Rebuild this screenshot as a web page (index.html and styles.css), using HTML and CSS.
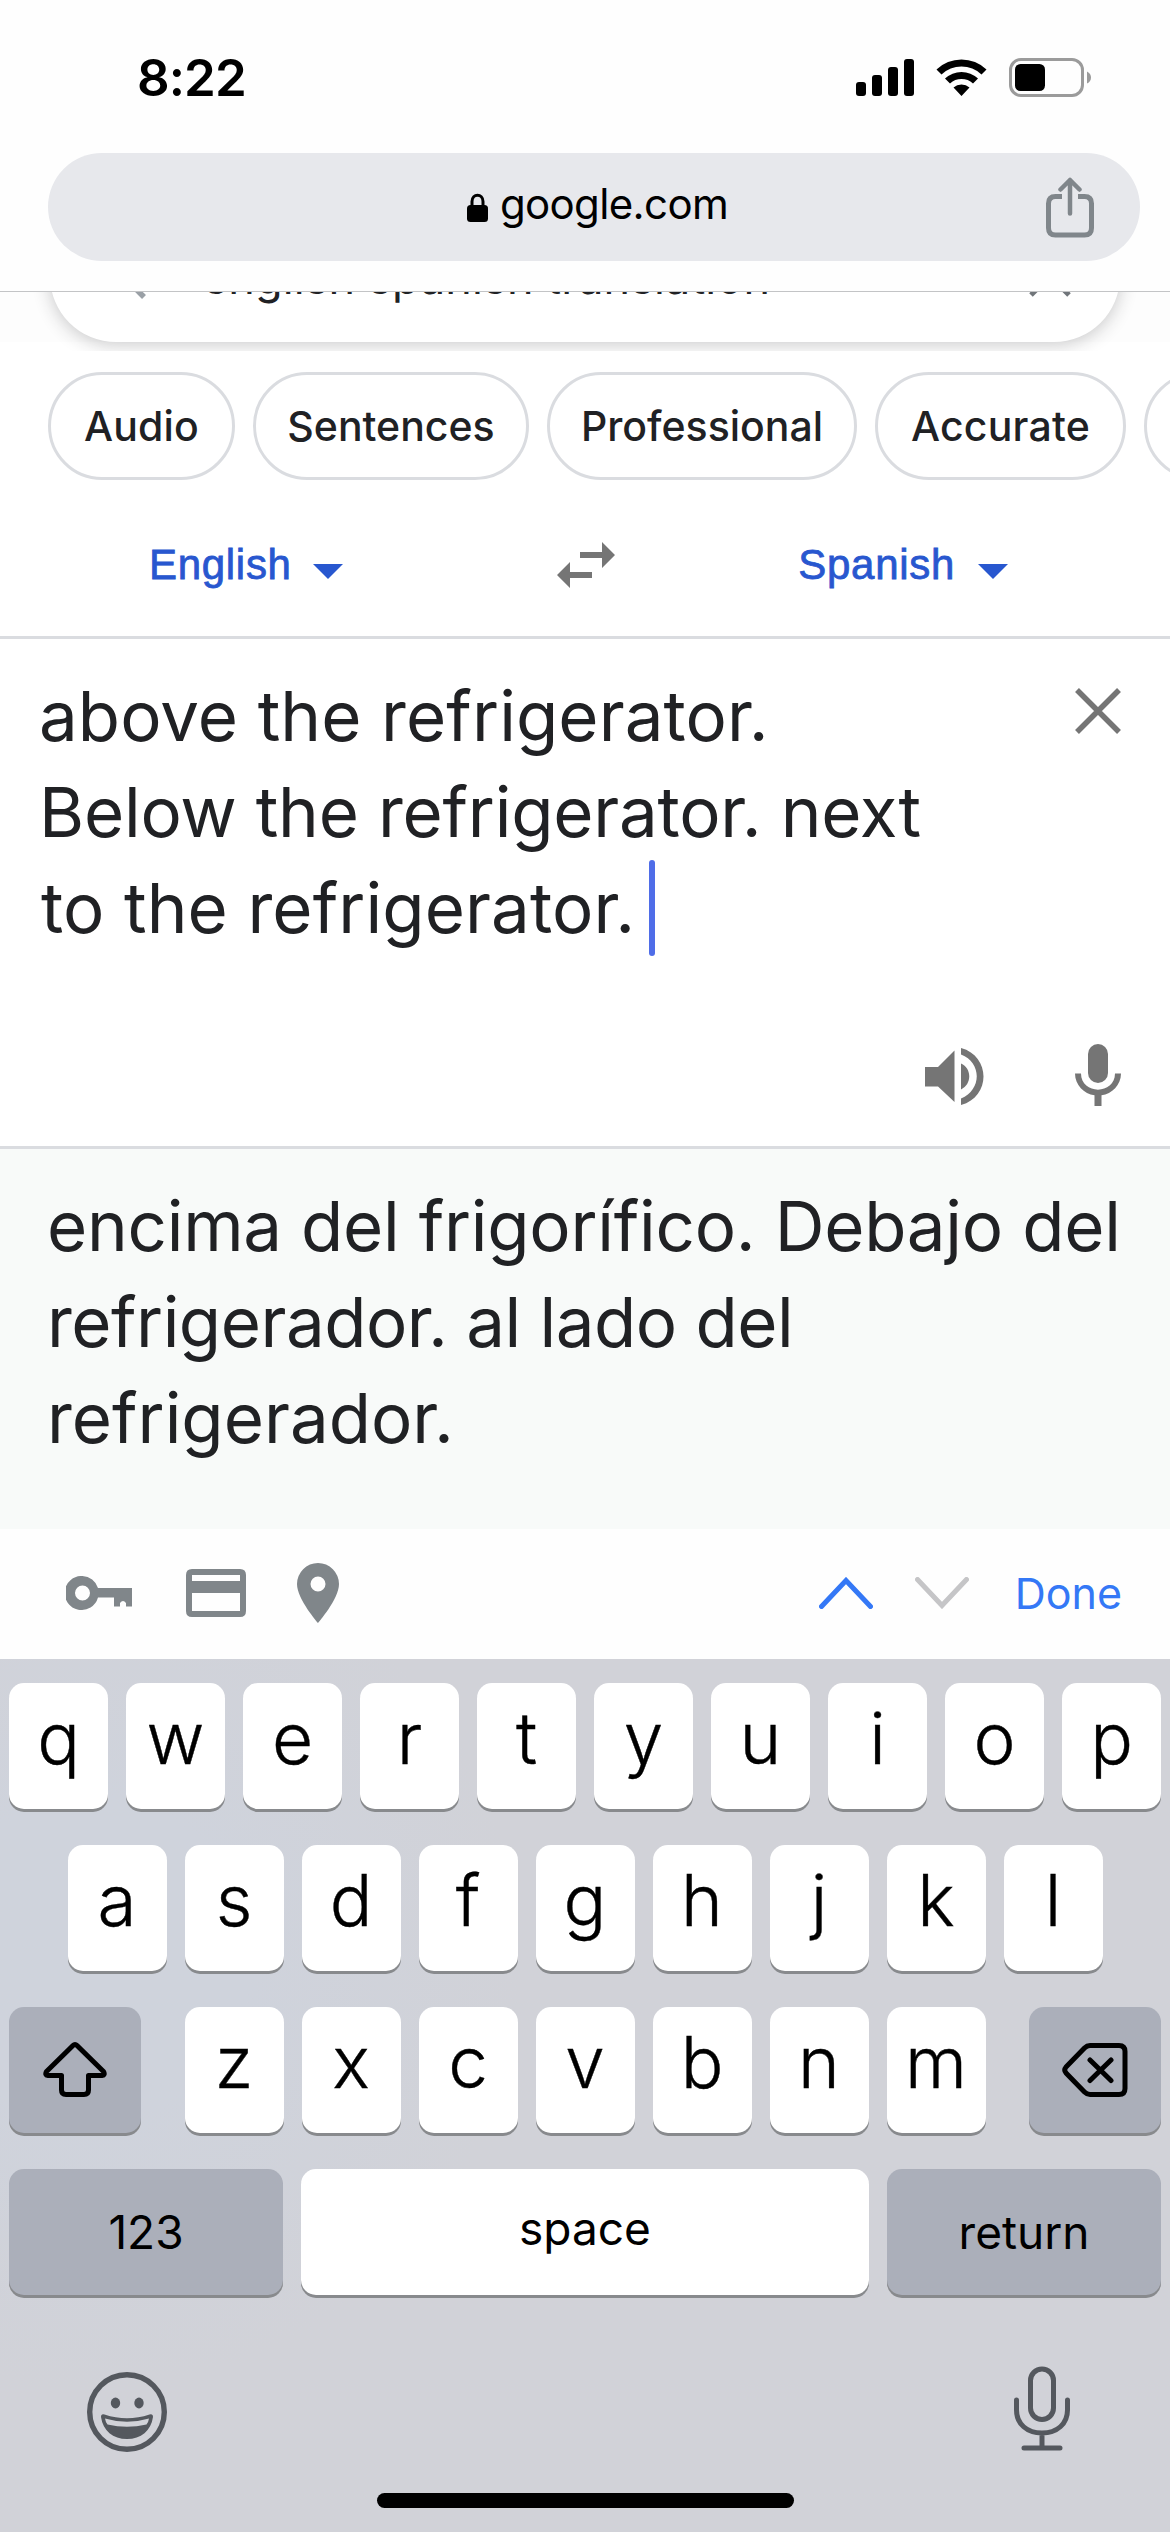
FILE: index.html
```html
<!DOCTYPE html>
<html lang="en">
<head>
<meta charset="utf-8">
<title>Translate</title>
<link rel="stylesheet" href="styles.css">
</head>
<body>
<div class="screen">
  <header class="browser">
    <div class="status">
      <span class="clock">8:22</span>
      <div class="indicators">
        <svg width="58" height="39" viewBox="0 0 58 39"><rect x="0" y="24" width="10" height="14" rx="3"/><rect x="16" y="17" width="10" height="21" rx="3"/><rect x="32" y="9" width="10" height="29" rx="3"/><rect x="48" y="1" width="10" height="37" rx="3"/></svg>
        <svg width="51" height="39" viewBox="0 0 51 39"><path d="M0.5 11.5A36 36 0 0 1 50.500 11.500L45.500 16.500A29 29 0 0 0 5.500 16.500ZM9 20.500A24 24 0 0 1 42 20.500L37 25.500A17 17 0 0 0 14 25.500ZM17.500 29.500A12 12 0 0 1 33.500 29.500L25.500 38Z"/></svg>
        <svg width="82" height="39" viewBox="0 0 82 39"><rect x="1.500" y="1.500" width="72" height="36" rx="10.500" fill="none" stroke="#9b9b9b" stroke-width="3"/><rect x="6" y="6" width="30" height="27" rx="5.500"/><path d="M78 13.500Q82 15.500 82 19.500T78 25.500Z" fill="#9b9b9b"/></svg>
      </div>
    </div>
    <div class="address">
      <div class="site">
        <svg width="21" height="29" viewBox="0 0 21 29"><path d="M5 14V8.500C5 0 16 0 16 8.500V14" fill="none" stroke="#000" stroke-width="3"/><rect x="0" y="12" width="21" height="17" rx="3.500"/></svg>
        <span class="domain">google.com</span>
      </div>
      <svg class="share" width="48" height="61" viewBox="0 0 48 61"><g fill="none" stroke="#80868b" stroke-width="5"><path d="M16 19.500H9.500Q2.500 19.500 2.500 26.500V51Q2.500 58 9.500 58H38.500Q45.500 58 45.500 51V26.500Q45.500 19.500 38.500 19.500H32"/><path d="M24 36.500V3M14.500 12.500L24 3L33.500 12.500" stroke-width="4.500" stroke-linecap="round" stroke-linejoin="round"/></g></svg>
    </div>
  </header>

  <div class="search-strip">
    <div class="search-box">
      <svg width="50" height="50" viewBox="0 0 50 50"><g fill="none" stroke="#9aa0a6" stroke-width="5.500"><circle cx="18" cy="18" r="14"/><path d="M28 28L46 46"/></g></svg>
      <span class="query">english spanish translation</span>
      <svg width="44" height="44" viewBox="0 0 44 44"><path d="M3 3L41 41M41 3L3 41" fill="none" stroke="#70757a" stroke-width="5"/></svg>
    </div>
  </div>

  <nav class="chips">
    <span class="chip audio">Audio</span>
    <span class="chip sentences">Sentences</span>
    <span class="chip professional">Professional</span>
    <span class="chip accurate">Accurate</span>
    <span class="chip more"></span>
  </nav>

  <div class="languages">
    <div class="language source">English <svg width="30" height="15" viewBox="0 0 30 15"><path d="M0 0H30L15 15Z"/></svg></div>
    <svg class="swap" width="58" height="46" viewBox="0 0 58 46"><path d="M23 10H45V0L58 13L45 26V16H23ZM35 30H13V20L0 33L13 46V36H35Z"/></svg>
    <div class="language target">Spanish <svg width="30" height="15" viewBox="0 0 30 15"><path d="M0 0H30L15 15Z"/></svg></div>
  </div>

  <section class="source-panel">
    <div class="source-main">
      <p class="source-text"><span class="l1">above the refrigerator.</span><br><span class="l2">Below the refrigerator. next</span><br><span class="l3">to the refrigerator.</span><span class="caret"></span></p>
      <svg class="clear" width="46" height="46" viewBox="0 0 46 46"><path d="M2 2L44 44M44 2L2 44" fill="none" stroke="#757575" stroke-width="5.500"/></svg>
    </div>
    <div class="source-tools">
      <svg width="59" height="62" viewBox="0 0 59 62"><path d="M0 23H13L29.500 6.500V58L13 42.500H0ZM36 19.500C47 24 47 40.500 36 45.500ZM36 4C66 12 66 53 36 61V54.500C57 46 57 18.500 36 10.500Z"/></svg>
      <svg width="46" height="62" viewBox="0 0 46 62"><rect x="13" y="0" width="20" height="39" rx="10"/><path d="M0 29.500H6C6 51 40 51 40 29.500H46C46 41 37 50 26.500 51.300V62H19.500V51.300C9 50 0 41 0 29.500Z"/></svg>
    </div>
  </section>

  <section class="result-panel">
    <p class="result-text"><span class="r1">encima del frigorífico. Debajo del</span><br><span class="r2">refrigerador. al lado del</span><br><span class="r3">refrigerador.</span></p>
  </section>

  <div class="form-bar">
    <div class="autofill">
      <svg class="key-icon" width="66" height="34" viewBox="0 0 66 34"><path fill-rule="evenodd" d="M16.500 0A17 17 0 0 1 32 12H66V30.500H60V27Q57 23 54 27V30.500H48V21.500H32A17 17 0 1 1 16.500 0ZM16.500 9.500A7.500 7.500 0 1 0 16.500 24.500A7.500 7.500 0 1 0 16.500 9.500Z"/></svg>
      <svg class="card-icon" width="60" height="48" viewBox="0 0 60 48"><path fill-rule="evenodd" d="M6 0H54Q60 0 60 6V42Q60 48 54 48H6Q0 48 0 42V6Q0 0 6 0ZM6 6V12H54V6ZM6 24V42H54V24Z"/></svg>
      <svg width="42" height="60" viewBox="0 0 42 60"><path fill-rule="evenodd" d="M21 0A21 21 0 0 1 42 21C42 36 21 60 21 60S0 36 0 21A21 21 0 0 1 21 0ZM21 13.500A7.500 7.500 0 1 0 21 28.500A7.500 7.500 0 1 0 21 13.500Z"/></svg>
    </div>
    <div class="field-nav">
      <svg width="54" height="32" viewBox="0 0 54 32"><path d="M2.500 29.500L27 3.500L51.500 29.500" fill="none" stroke="#3478f6" stroke-width="5" stroke-linecap="round"/></svg>
      <svg width="54" height="32" viewBox="0 0 54 32"><path d="M2.500 2.500L27 28.500L51.500 2.500" fill="none" stroke="#c5c5c7" stroke-width="5" stroke-linecap="round"/></svg>
      <span class="done">Done</span>
    </div>
  </div>

  <div class="keyboard">
    <div class="keys">
      <div class="row"><span class="key">q</span><span class="key">w</span><span class="key">e</span><span class="key">r</span><span class="key">t</span><span class="key">y</span><span class="key">u</span><span class="key">i</span><span class="key">o</span><span class="key">p</span></div>
      <div class="row"><span class="key">a</span><span class="key">s</span><span class="key">d</span><span class="key">f</span><span class="key">g</span><span class="key">h</span><span class="key">j</span><span class="key">k</span><span class="key">l</span></div>
      <div class="row spread">
        <span class="key dark side"><svg width="64" height="56" viewBox="0 0 64 56"><path d="M34 3.500L60.500 29.500Q62.500 33 59 33.500H45.500V48Q45.500 52.500 41 52.500H23Q18.500 52.500 18.500 48V33.500H5Q1.500 33 3.500 29.500L30 3.500Q32 1.500 34 3.500Z"/></svg></span>
        <div class="row"><span class="key">z</span><span class="key">x</span><span class="key">c</span><span class="key">v</span><span class="key">b</span><span class="key">n</span><span class="key">m</span></div>
        <span class="key dark side"><svg width="66" height="56" viewBox="0 0 66 56"><path d="M28 3.500H57Q63 3.500 63 9.500V46.500Q63 52.500 57 52.500H28Q25 52.500 22.500 50L4 31Q1.500 28 4 25L22.500 6Q25 3.500 28 3.500ZM28 18L49 38.500M49 18L28 38.500"/></svg></span>
      </div>
      <div class="row">
        <span class="key dark wide">123</span><span class="key space">space</span><span class="key dark wide">return</span>
      </div>
    </div>
    <div class="dock">
      <svg class="emoji" width="80" height="80" viewBox="0 0 80 80"><circle cx="40" cy="40" r="37.300" fill="none" stroke="#54585e" stroke-width="5.400"/><ellipse cx="28.500" cy="31" rx="4.700" ry="5.400"/><ellipse cx="52" cy="31" rx="4.700" ry="5.400"/><path fill-rule="evenodd" d="M14 45Q14 41.500 17.500 42.500Q40 50 62.500 42.500Q66 41.500 66 45C64 59 54 67 40 67S16 59 14 45ZM18 46.500Q18.500 50 20.500 52.500Q40 57 59.500 52.500Q61.500 50 62 46.500Q40 53 18 46.500Z"/></svg>
      <svg width="56" height="86" viewBox="0 0 56 86"><g fill="none" stroke="#54585e" stroke-width="5" stroke-linecap="round"><rect x="16.500" y="3" width="23" height="50.500" rx="11.500"/><path d="M2.500 34V44C2.500 58 13 67 28 67S53.500 58 53.500 44V34M28 67V82M10 82H46"/></g></svg>
    </div>
    <div class="home"></div>
  </div>
</div>
</body>
</html>
```
FILE: styles.css
```css
* { box-sizing: border-box; }
body { margin: 0; background: #fff; }
svg { display: block; flex: none; }
p { margin: 0; }

.screen {
  width: 1170px;
  height: 2532px;
  overflow: hidden;
  display: flex;
  flex-direction: column;
  font-family: Inter, "Liberation Sans", sans-serif;
  color: #202124;
  white-space: nowrap;
}
.screen > * { flex: none; }

/* Browser chrome */
.browser {
  height: 292px;
  background: #fefefe;
  border-bottom: 1px solid #c3c4c6;
}
.status {
  height: 153px;
  padding: 2px 79px 0 137px;
  display: flex;
  align-items: center;
  justify-content: space-between;
  color: #000;
}
.clock { font-size: 51px; font-weight: 600; letter-spacing: -0.9px; }
.indicators { display: flex; gap: 22px; }
.address {
  height: 108px;
  margin: 0 30px 0 48px;
  padding: 0 46px 0 94px;
  border-radius: 54px;
  background: #e7e8ec;
  display: flex;
  align-items: center;
}
.site {
  flex: 1;
  padding-left: 7px;
  display: flex;
  justify-content: center;
  align-items: center;
  gap: 12px;
  color: #000;
}
.domain { font-size: 42px; letter-spacing: -0.64px; padding-bottom: 7px; }

/* Search box, partly scrolled under the browser chrome */
.search-strip {
  height: 59px;
  padding: 0 50px;
  overflow: hidden;
  background: linear-gradient(#fdfdfd 50px, #fff 50px);
}
.search-box {
  height: 132px;
  margin-top: -82px;
  padding: 0 48px;
  border-radius: 66px;
  background: #fff;
  box-shadow: 0 3px 18px rgba(32, 33, 36, 0.24);
  display: flex;
  align-items: center;
}
.query { flex: 1; margin-left: 54px; padding-top: 3px; font-size: 45px; letter-spacing: 0.1px; }

/* Related searches */
.chips {
  display: flex;
  gap: 18px;
  padding: 21px 0 0 48px;
  overflow: hidden;
}
.chip {
  flex: none;
  height: 108px;
  border: 3px solid #dadce0;
  border-radius: 54px;
  display: flex;
  align-items: center;
  justify-content: center;
  font-size: 41px;
  font-weight: 500;
}
.audio { width: 187px; letter-spacing: 0.2px; }
.sentences { width: 276px; }
.professional { width: 310px; }
.accurate { width: 251px; letter-spacing: 0.2px; }
.more { width: 220px; }

/* Language picker */
.languages {
  height: 159px;
  padding: 13px 162px 0 148px;
  border-bottom: 3px solid #dadce0;
  display: flex;
  align-items: center;
  justify-content: space-between;
}
.language {
  display: flex;
  align-items: center;
  gap: 21px;
  font-family: "Liberation Sans", Arial, sans-serif;
  font-size: 42px;
  letter-spacing: 0.7px;
  color: #2857cf;
  -webkit-text-stroke: 0.8px #2857cf;
}
.source { padding-left: 1px; }
.language svg { fill: #2857cf; margin-top: 14px; }
.target { gap: 23px; }
.swap { fill: #757575; margin-right: -31px; }

/* Source text */
.source-panel {
  height: 510px;
  padding: 29px 49px 40px 39px;
  border-bottom: 3px solid #dadce0;
  display: flex;
  flex-direction: column;
  justify-content: space-between;
}
.source-main { display: flex; justify-content: space-between; align-items: flex-start; }
.source-text, .result-text { font-size: 69px; line-height: 96px; }
.l1 { letter-spacing: 0.1px; }
.l2 { letter-spacing: -0.22px; }
.l3 { letter-spacing: 0.1px; margin-left: 2px; }
.caret {
  display: inline-block;
  width: 6px;
  height: 96px;
  margin-left: 14px;
  border-radius: 3px;
  background: #4f6de8;
  vertical-align: top;
}
.clear { margin-top: 20px; }
.source-tools { display: flex; justify-content: flex-end; gap: 91px; fill: #757575; }

/* Translation */
.result-panel { height: 380px; padding: 29px 0 0 47px; background: #f8faf9; }
.r1 { letter-spacing: -0.24px; }
.r2 { letter-spacing: -0.5px; }

/* Form assistant bar */
.form-bar {
  height: 130px;
  padding: 0 48px 2px 66px;
  background: #fefefe;
  display: flex;
  align-items: center;
  justify-content: space-between;
}
.autofill, .field-nav { display: flex; align-items: center; }
.autofill { fill: #80868a; }
.key-icon { margin-right: 54px; }
.card-icon { margin-right: 51px; }
.field-nav { gap: 42px; }
.done { font-size: 43px; color: #3478f6; margin-left: 4px; }

/* Keyboard */
.keyboard {
  flex: 1;
  padding: 24px 9px 0;
  background: radial-gradient(circle at 90px 300px, #cfd3dc 0, #cfd3dc 160px, #d1d2d8 430px);
  color: #000;
}
.keys { display: flex; flex-direction: column; gap: 36px; }
.row { display: flex; justify-content: center; gap: 18px; }
.spread { justify-content: space-between; }
.key {
  width: 99px;
  height: 126px;
  padding-bottom: 16px;
  border-radius: 15px;
  background: #fff;
  box-shadow: 0 3px 0 #888a8d;
  display: flex;
  align-items: center;
  justify-content: center;
  font-size: 71px;
  font-weight: 300;
  -webkit-text-stroke: 0.4px #000;
}
.dark { background: #abafba; padding-bottom: 0; }
.side { width: 132px; }
.side svg { fill: none; stroke: #000; stroke-width: 5; stroke-linecap: round; stroke-linejoin: round; }
.wide, .space { font-size: 46px; font-weight: 400; -webkit-text-stroke: 0; }
.wide { width: 274px; }
.space { width: 568px; padding-bottom: 9px; }
.dock {
  margin-top: 71px;
  padding: 0 91px 0 78px;
  display: flex;
  align-items: center;
  justify-content: space-between;
  fill: #54585e;
}
.emoji { margin-top: 6px; }
.home { width: 417px; height: 15px; margin: 41px auto 0; border-radius: 8px; background: #000; }
```
